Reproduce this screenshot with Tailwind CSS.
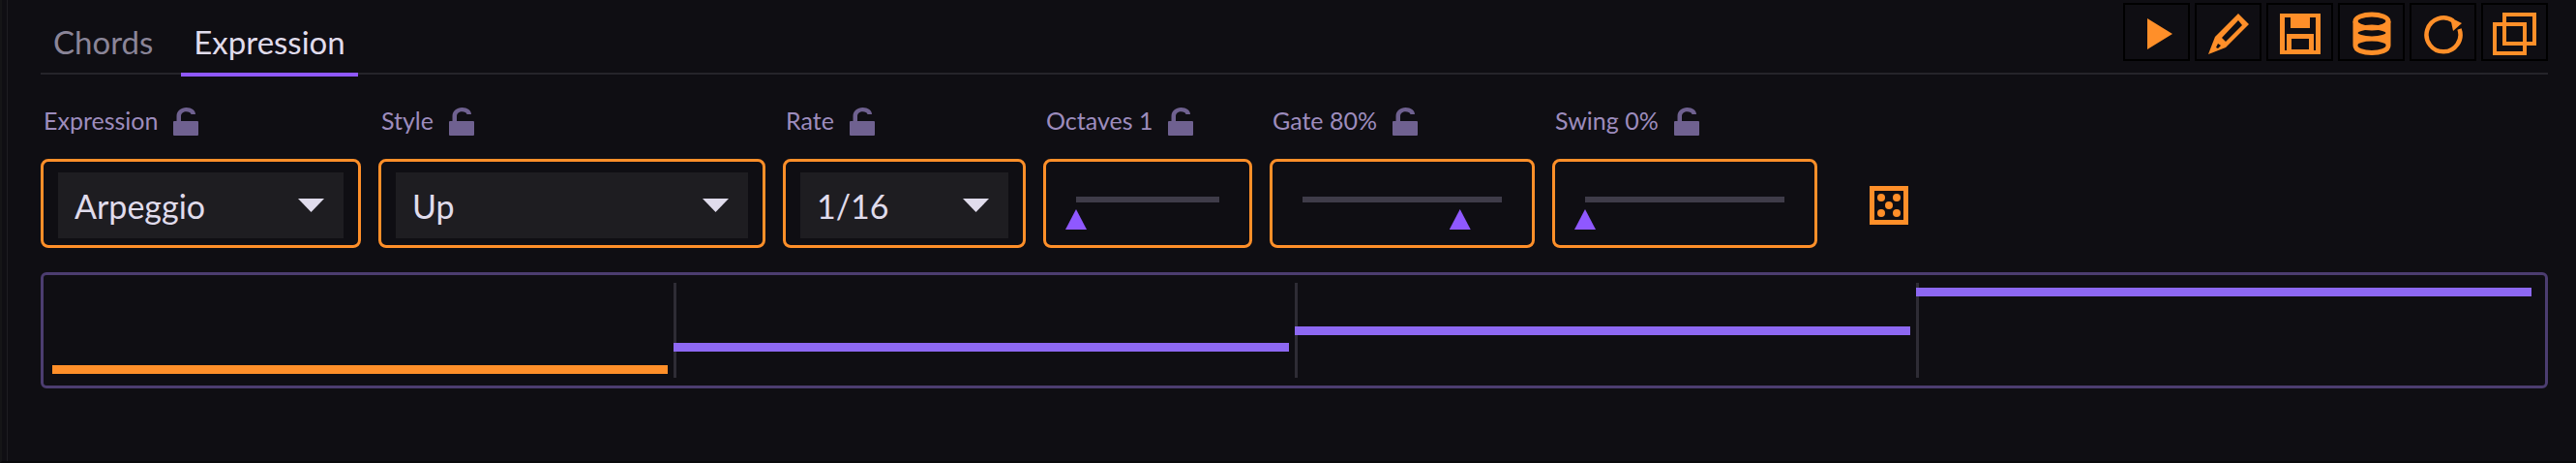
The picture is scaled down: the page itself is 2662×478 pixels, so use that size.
<!DOCTYPE html>
<html lang="en">

<head>
  <meta charset="UTF-8" />
  <meta name="viewport" content="width=device-width, initial-scale=1.0" />
  <title>Expression</title>
  <script src="https://cdn.jsdelivr.net/npm/@tailwindcss/browser@4"></script>
</head>

<body class="font-['Lato',sans-serif] bg-[#0f0e13] text-[#e0dcec]">

  <!-- Shared icons -->
  <svg class="hidden">
    <symbol id="unlock" viewBox="0 0 26 29">
      <rect y="14" width="26" height="15" rx="1" />
      <path d="M3.500 15V9C3.500 3.500 8 0 13.500 0C19 0 23 3 23 7H18.500C18 5 16 4.200 13.500 4.200C10.500 4.200 8 6 8 9V15Z" />
    </symbol>
    <symbol id="caret" viewBox="0 0 27 14">
      <path d="M0 0H27L13.500 14Z" />
    </symbol>
  </svg>

  <main class="flex flex-col min-h-screen border-l-2 border-l-[#151517] border-b-2 border-b-[#09090b] pl-[5px]">
    <div class="flex-1 border-l border-[#1e1d22] pl-[34px] pr-[29px]">

      <!-- Tabs and toolbar -->
      <header class="flex items-start justify-between h-[77px] pt-[3px] border-b-2 border-[#25242a]">
        <nav class="flex gap-4 text-[33px] leading-[40px]">
          <button type="button" class="h-[76px] pt-[20px] pb-3 px-[13px] border-b-4 border-transparent text-[#8a8598]">Chords</button>
          <button type="button" class="h-[76px] pt-[20px] pb-3 px-[13px] border-b-4 border-[#8f58ff]">Expression</button>
        </nav>
        <div class="flex gap-[5px] text-[#ff8f29]">
          <button type="button" aria-label="Play" class="w-[69px] h-[60px] border-2 border-black flex items-center justify-center">
            <svg class="w-[50px] h-[50px]" viewBox="0 0 50 50" fill="currentColor">
              <path d="M15 11V43L41 27Z" />
            </svg>
          </button>
          <button type="button" aria-label="Edit" class="w-[69px] h-[60px] border-2 border-black flex items-center justify-center">
            <svg class="w-[50px] h-[50px]" viewBox="0 0 50 50" fill="currentColor" fill-rule="evenodd">
              <path d="M35 6L46 17L22 41L4 48L11 30ZM35 13L18 31L22 35L39 18ZM14 37L12 41L14 42L17 39Z" />
            </svg>
          </button>
          <button type="button" aria-label="Save" class="w-[69px] h-[60px] border-2 border-black flex items-center justify-center">
            <svg class="w-[50px] h-[50px]" viewBox="0 0 50 50" fill="currentColor" fill-rule="evenodd">
              <path d="M4 6H46V48H4ZM9 10V44H11V27H39V44H41V10H35V21H15V10ZM16 32V43H34V32Z" />
            </svg>
          </button>
          <button type="button" aria-label="Library" class="w-[69px] h-[60px] border-2 border-black flex items-center justify-center">
            <svg class="w-[50px] h-[50px]" viewBox="0 0 50 50" fill="none" stroke="currentColor" stroke-width="5">
              <ellipse cx="25" cy="14" rx="17" ry="7" />
              <path d="M8 14V39C8 49 42 49 42 39V14M8 26C8 18 42 18 42 26C42 34 8 34 8 26M8 38C8 30 42 30 42 38" />
            </svg>
          </button>
          <button type="button" aria-label="Reset" class="w-[69px] h-[60px] border-2 border-black flex items-center justify-center">
            <svg class="w-[50px] h-[50px]" viewBox="0 0 50 50" fill="none">
              <path d="M35 13.500A17.500 17.500 0 1 0 41.500 22" stroke="currentColor" stroke-width="4.500" />
              <path d="M32 10L44 16L35 24Z" fill="currentColor" />
            </svg>
          </button>
          <button type="button" aria-label="Copy" class="w-[69px] h-[60px] border-2 border-black flex items-center justify-center">
            <svg class="w-[50px] h-[50px]" viewBox="0 0 50 50" fill="none" stroke="currentColor" stroke-width="4">
              <path d="M14 7H45V37H14ZM4 17H35V47H4Z" />
            </svg>
          </button>
        </div>
      </header>

      <!-- Parameters -->
      <section class="flex items-start gap-[18px] pt-[30px]">
        <div class="w-[331px]">
          <div class="flex items-center gap-4 h-9 pl-[3px] text-[25px] text-[#9d8cbd]">
            <label for="expression">Expression</label>
            <button type="button" aria-label="Lock expression"><svg class="w-[26px] h-[29px] fill-[#6f6190]"><use href="#unlock" /></svg></button>
          </div>
          <div class="h-[92px] mt-[21px] pt-[11px] px-[15px] border-3 border-[#ff8f29] rounded-lg">
            <div class="grid items-center">
              <select id="expression" class="col-start-1 row-start-1 appearance-none w-full h-[68px] pl-[17px] bg-[#1e1d21] text-[34px]">
                <option>Arpeggio</option>
              </select>
              <svg class="col-start-1 row-start-1 justify-self-end pointer-events-none w-[27px] h-[14px] mr-5 fill-[#e0dcec]"><use href="#caret" /></svg>
            </div>
          </div>
        </div>

        <div class="w-[400px]">
          <div class="flex items-center gap-4 h-9 pl-[3px] text-[25px] text-[#9d8cbd]">
            <label for="style">Style</label>
            <button type="button" aria-label="Lock style"><svg class="w-[26px] h-[29px] fill-[#6f6190]"><use href="#unlock" /></svg></button>
          </div>
          <div class="h-[92px] mt-[21px] pt-[11px] px-[15px] border-3 border-[#ff8f29] rounded-lg">
            <div class="grid items-center">
              <select id="style" class="col-start-1 row-start-1 appearance-none w-full h-[68px] pl-[17px] bg-[#1e1d21] text-[34px]">
                <option>Up</option>
              </select>
              <svg class="col-start-1 row-start-1 justify-self-end pointer-events-none w-[27px] h-[14px] mr-5 fill-[#e0dcec]"><use href="#caret" /></svg>
            </div>
          </div>
        </div>

        <div class="w-[251px]">
          <div class="flex items-center gap-4 h-9 pl-[3px] text-[25px] text-[#9d8cbd]">
            <label for="rate">Rate</label>
            <button type="button" aria-label="Lock rate"><svg class="w-[26px] h-[29px] fill-[#6f6190]"><use href="#unlock" /></svg></button>
          </div>
          <div class="h-[92px] mt-[21px] pt-[11px] px-[15px] border-3 border-[#ff8f29] rounded-lg">
            <div class="grid items-center">
              <select id="rate" class="col-start-1 row-start-1 appearance-none w-full h-[68px] pl-[17px] bg-[#1e1d21] text-[34px]">
                <option>1/16</option>
              </select>
              <svg class="col-start-1 row-start-1 justify-self-end pointer-events-none w-[27px] h-[14px] mr-5 fill-[#e0dcec]"><use href="#caret" /></svg>
            </div>
          </div>
        </div>

        <div class="w-[216px]">
          <div class="flex items-center gap-4 h-9 pl-[3px] text-[25px] text-[#9d8cbd]">
            <label for="octaves">Octaves 1</label>
            <button type="button" aria-label="Lock octaves"><svg class="w-[26px] h-[29px] fill-[#6f6190]"><use href="#unlock" /></svg></button>
          </div>
          <div class="h-[92px] mt-[21px] pt-9 px-5 border-3 border-[#ff8f29] rounded-lg">
            <input id="octaves" type="range" min="1" max="4" value="1"
              class="block appearance-none w-full h-[34px] bg-[linear-gradient(#3f3c49,#3f3c49)] bg-no-repeat bg-[position:center_top] bg-[length:calc(100%-22px)_6px] [&::-webkit-slider-thumb]:appearance-none [&::-webkit-slider-thumb]:w-[22px] [&::-webkit-slider-thumb]:h-[21px] [&::-webkit-slider-thumb]:mt-[13px] [&::-webkit-slider-thumb]:bg-[#8f58ff] [&::-webkit-slider-thumb]:[clip-path:polygon(50%_0,100%_100%,0_100%)]" />
          </div>
        </div>

        <div class="w-[274px]">
          <div class="flex items-center gap-4 h-9 pl-[3px] text-[25px] text-[#9d8cbd]">
            <label for="gate">Gate 80%</label>
            <button type="button" aria-label="Lock gate"><svg class="w-[26px] h-[29px] fill-[#6f6190]"><use href="#unlock" /></svg></button>
          </div>
          <div class="h-[92px] mt-[21px] pt-9 px-5 border-3 border-[#ff8f29] rounded-lg">
            <input id="gate" type="range" min="0" max="100" value="79"
              class="block appearance-none w-full h-[34px] bg-[linear-gradient(#3f3c49,#3f3c49)] bg-no-repeat bg-[position:center_top] bg-[length:calc(100%-22px)_6px] [&::-webkit-slider-thumb]:appearance-none [&::-webkit-slider-thumb]:w-[22px] [&::-webkit-slider-thumb]:h-[21px] [&::-webkit-slider-thumb]:mt-[13px] [&::-webkit-slider-thumb]:bg-[#8f58ff] [&::-webkit-slider-thumb]:[clip-path:polygon(50%_0,100%_100%,0_100%)]" />
          </div>
        </div>

        <div class="w-[274px]">
          <div class="flex items-center gap-4 h-9 pl-[3px] text-[25px] text-[#9d8cbd]">
            <label for="swing">Swing 0%</label>
            <button type="button" aria-label="Lock swing"><svg class="w-[26px] h-[29px] fill-[#6f6190]"><use href="#unlock" /></svg></button>
          </div>
          <div class="h-[92px] mt-[21px] pt-9 px-5 border-3 border-[#ff8f29] rounded-lg">
            <input id="swing" type="range" min="0" max="100" value="0"
              class="block appearance-none w-full h-[34px] bg-[linear-gradient(#3f3c49,#3f3c49)] bg-no-repeat bg-[position:center_top] bg-[length:calc(100%-22px)_6px] [&::-webkit-slider-thumb]:appearance-none [&::-webkit-slider-thumb]:w-[22px] [&::-webkit-slider-thumb]:h-[21px] [&::-webkit-slider-thumb]:mt-[13px] [&::-webkit-slider-thumb]:bg-[#8f58ff] [&::-webkit-slider-thumb]:[clip-path:polygon(50%_0,100%_100%,0_100%)]" />
          </div>
        </div>

        <button type="button" aria-label="Randomize" class="mt-[85px] ml-9">
          <svg class="w-10 h-10 text-[#ff8f29]" viewBox="0 0 40 40" fill="currentColor">
            <path d="M0 0H40V40H0ZM5 5V35H35V5Z" fill-rule="evenodd" />
            <circle cx="12" cy="12" r="4" />
            <circle cx="28" cy="12" r="4" />
            <circle cx="20" cy="20" r="4" />
            <circle cx="12" cy="28" r="4" />
            <circle cx="28" cy="28" r="4" />
          </svg>
        </button>
      </section>

      <!-- Pattern preview -->
      <section class="grid grid-cols-4 h-[120px] mt-[25px] py-2 pl-[9px] pr-2 border-3 border-[#4c3d70] rounded-md">
        <div class="flex items-start pr-1.5">
          <div class="w-full h-[9px] bg-[#ff8f29]" style="margin-top: 85px"></div>
        </div>
        <div class="flex items-start bg-[linear-gradient(#2e2c35,#2e2c35)] bg-[length:3px_100%] bg-no-repeat pr-1.5">
          <div class="w-full h-[9px] bg-[#8d68f2]" style="margin-top: 62px"></div>
        </div>
        <div class="flex items-start bg-[linear-gradient(#2e2c35,#2e2c35)] bg-[length:3px_100%] bg-no-repeat pr-1.5">
          <div class="w-full h-[9px] bg-[#8d68f2]" style="margin-top: 45px"></div>
        </div>
        <div class="flex items-start bg-[linear-gradient(#2e2c35,#2e2c35)] bg-[length:3px_100%] bg-no-repeat pr-1.5">
          <div class="w-full h-[9px] bg-[#8d68f2]" style="margin-top: 5px"></div>
        </div>
      </section>

    </div>
  </main>
</body>

</html>
